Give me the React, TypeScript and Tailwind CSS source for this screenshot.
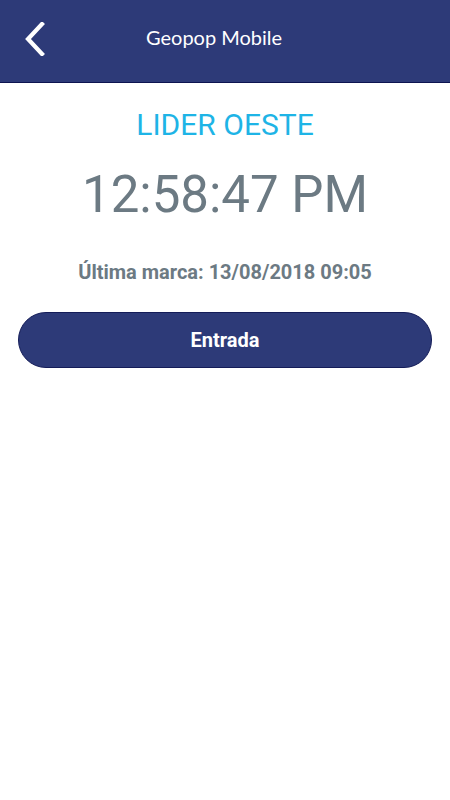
export default function App() {
  return (
    <div className="min-h-[800px] w-full bg-white font-['Roboto',sans-serif]">
      <header className="flex h-[83px] items-center border-b border-[#0d1450] bg-[#2d3a78] relative">
        <button className="ml-[22px] mb-[5px] flex h-[40px] w-[26px] items-center justify-center">
          <svg width="22" height="34" viewBox="0 0 22 34" fill="none">
            <path d="M18 2 L4 17 L18 32" stroke="white" strokeWidth="4.2" strokeLinecap="square" />
          </svg>
        </button>
        <h1 className="absolute left-[146px] top-[22px] font-['Lato',sans-serif] text-[20px] text-white">
          Geopop Mobile
        </h1>
      </header>

      <div className="flex flex-col items-center">
        <h2 className="mt-[24px] text-[30px] leading-[36px] text-[#1eb4e6]">LIDER OESTE</h2>
        <div className="mt-[22px] text-[51px] leading-[60px] text-[#6c7a83]">12:58:47 PM</div>
        <p className="mt-[35px] text-[20px] font-bold leading-[24px] text-[#6c7a83]">
          Última marca: 13/08/2018 09:05
        </p>
      </div>

      <div className="mt-[28px] px-[18px]">
        <button className="flex h-[56px] w-full items-center justify-center rounded-full border border-[#141c58] bg-[#2d3a78] text-[20px] font-bold text-white">
          Entrada
        </button>
      </div>
    </div>
  );
}
